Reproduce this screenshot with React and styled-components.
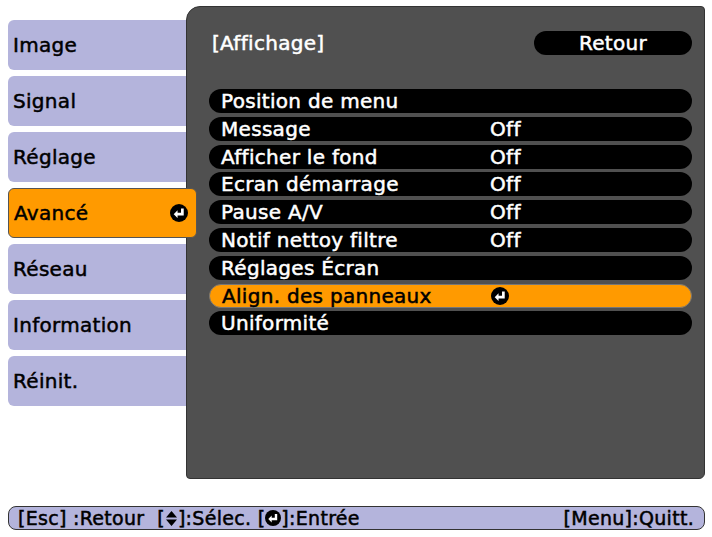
import React from "react";
import styled, { createGlobalStyle } from "styled-components";

const G = createGlobalStyle`
  body{margin:0;background:#fff;font-family:"DejaVu Sans",sans-serif;font-weight:normal;-webkit-text-stroke:0.5px currentColor;letter-spacing:0.3px;}
`;
const Page = styled.div`width:712px;height:537px;position:relative;`;
const Main = styled.div`display:flex;padding:6px 7px 0 8px;height:473px;`;
const Tabs = styled.div`display:flex;flex-direction:column;gap:6px;padding-top:14px;width:178px;flex:none;`;
const Tab = styled.div`
  height:50px;box-sizing:border-box;display:flex;align-items:center;justify-content:space-between;
  padding:0 8px 0 5px;font-size:20px;color:#000;
  background:${p=>p.$on?"#ff9a00":"#b4b4dc"};
  border-radius:${p=>p.$on?"6px":"6px 0 0 6px"};
  width:${p=>p.$on?"189px":"178px"};
  border:${p=>p.$on?"1px solid #555":"none"};
  position:relative;z-index:${p=>p.$on?2:0};
`;
const Panel = styled.div`flex:1;background:#505050;border-radius:14px 4px 6px 4px;border:1px solid #333;
  padding:20px 12px 0 25px;display:flex;flex-direction:column;`;
const Header = styled.div`display:flex;justify-content:space-between;align-items:center;height:32px;color:#fff;font-size:20px;`;
const Back = styled.div`width:158px;height:24px;background:#000;border-radius:12px;color:#fff;
  display:flex;align-items:center;justify-content:center;font-size:20px;`;
const List = styled.div`margin-top:30px;margin-left:-3px;display:flex;flex-direction:column;`;
const Row = styled.div`height:24px;margin-bottom:3.8px;border-radius:12px;display:flex;align-items:center;
  padding-left:12px;font-size:20px;color:${p=>p.$on?"#000":"#fff"};
  background:${p=>p.$on?"#ff9a00":"#000"};${p=>p.$on?"border:1px solid #777;box-sizing:border-box;":""}`;
const Label = styled.span`width:269px;flex:none;`;
const Footer = styled.div`margin:27px 7px 0 8px;height:22px;background:#b4b4dc;border:1px solid #333;border-radius:8px;
  display:flex;justify-content:space-between;align-items:center;padding:0 10px 0 9px;font-size:19px;`;
const Grp = styled.span`display:flex;align-items:center;white-space:pre;`;

const Enter = ({c="#000",f="#fff",s=18}) => (
  <svg width={s} height={s} viewBox="0 0 16 16" style={{verticalAlign:"middle"}}><circle cx="8" cy="8" r="8" fill={c}/>
  <path d="M11 4v5H5.5" stroke={f} strokeWidth="2.4" fill="none"/><path d="M3.3 9l3.4-3.4v6.8z" fill={f}/></svg>
);
const Updown = () => (<svg width="13" height="17" viewBox="0 0 13 17"><path d="M6.5 1l5.5 6.5h-11zM6.5 16l5.5-6.5h-11z" fill="#000"/></svg>);

const rows=[["Position de menu",""],["Message","Off"],["Afficher le fond","Off"],["Ecran démarrage","Off"],["Pause A/V","Off"],["Notif nettoy filtre","Off"],["Réglages Écran",""],["Align. des panneaux","E"],["Uniformité",""]];
export default function App(){
  return <Page><G/>
    <Main>
      <Tabs>
        {["Image","Signal","Réglage","Avancé","Réseau","Information","Réinit."].map(t=>
          <Tab key={t} $on={t==="Avancé"}>{t}{t==="Avancé"&&<Enter/>}</Tab>)}
      </Tabs>
      <Panel>
        <Header><span>[Affichage]</span><Back>Retour</Back></Header>
        <List>
          {rows.map(([a,b])=><Row key={a} $on={b==="E"}><Label>{a}</Label>{b==="E"?<Enter/>:b}</Row>)}
        </List>
      </Panel>
    </Main>
    <Footer><Grp>[Esc] :Retour  [<Updown/>]:Sélec. [<Enter s={16}/>]:Entrée</Grp><span>[Menu]:Quitt.</span></Footer>
  </Page>;
}
